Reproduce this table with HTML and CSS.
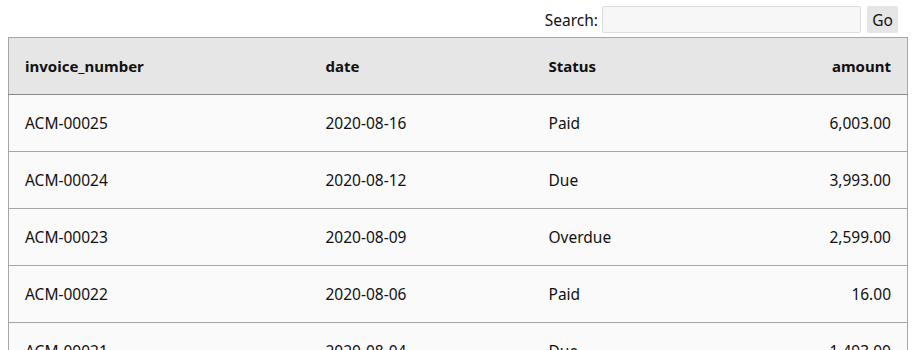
FILE: index.html
```html
<!DOCTYPE html>
<html>
<head>
<meta charset="utf-8">
<link rel="stylesheet" href="styles.css">
</head>
<body>
<form class="search">
  <label class="search-label" for="q">Search:</label>
  <input class="search-input" id="q" type="text">
  <button class="search-go" type="button">Go</button>
</form>
<table class="grid">
  <thead>
    <tr>
      <th class="c1">invoice_number</th>
      <th class="c2">date</th>
      <th class="c3">Status</th>
      <th class="num">amount</th>
    </tr>
  </thead>
  <tbody>
    <tr><td>ACM-00025</td><td>2020-08-16</td><td>Paid</td><td class="num">6,003.00</td></tr>
    <tr><td>ACM-00024</td><td>2020-08-12</td><td>Due</td><td class="num">3,993.00</td></tr>
    <tr><td>ACM-00023</td><td>2020-08-09</td><td>Overdue</td><td class="num">2,599.00</td></tr>
    <tr><td>ACM-00022</td><td>2020-08-06</td><td>Paid</td><td class="num">16.00</td></tr>
    <tr><td>ACM-00021</td><td>2020-08-04</td><td>Due</td><td class="num">1,493.00</td></tr>
  </tbody>
</table>
</body>
</html>
```
FILE: styles.css
```css
html, body {
  margin: 0;
  padding: 0;
  background: #ffffff;
}
body {
  padding: 6px 9px 0 8px;
  font-family: "Noto Sans", "Open Sans", sans-serif;
  font-size: 15.5px;
  color: #111111;
}
.search {
  display: flex;
  justify-content: flex-end;
  align-items: center;
  gap: 4px;
  height: 27px;
  margin: 0 10px 4px 0;
}
.search-label {
  font-size: 15.5px;
}
.search-input {
  box-sizing: border-box;
  width: 259px;
  height: 27px;
  border: 1px solid #dddddd;
  border-radius: 2px;
  background: #f7f7f7;
  margin: 0 2px 0 0;
  padding: 0 6px;
}
.search-go {
  box-sizing: border-box;
  height: 27px;
  width: 31px;
  padding: 0;
  border: none;
  border-radius: 2px;
  background: #e6e6e6;
  font-family: inherit;
  font-size: 15.5px;
  color: #111111;
}
.grid {
  width: 900px;
  table-layout: fixed;
  border-collapse: collapse;
  border: 1px solid #a6a6a6;
}
.grid th, .grid td {
  text-align: left;
  padding: 0 16px;
  height: 57px;
  box-sizing: border-box;
  border-bottom: 1px solid #a6a6a6;
  white-space: nowrap;
}
.grid th {
  background: #e6e6e6;
  font-weight: 700;
  font-size: 15px;
  border-bottom: 1px solid #888888;
}
.grid td {
  background: #fafafa;
}
.grid .num {
  text-align: right;
}
.c1 { width: 301px; }
.c2 { width: 223px; }
.c3 { width: 200px; }
```
